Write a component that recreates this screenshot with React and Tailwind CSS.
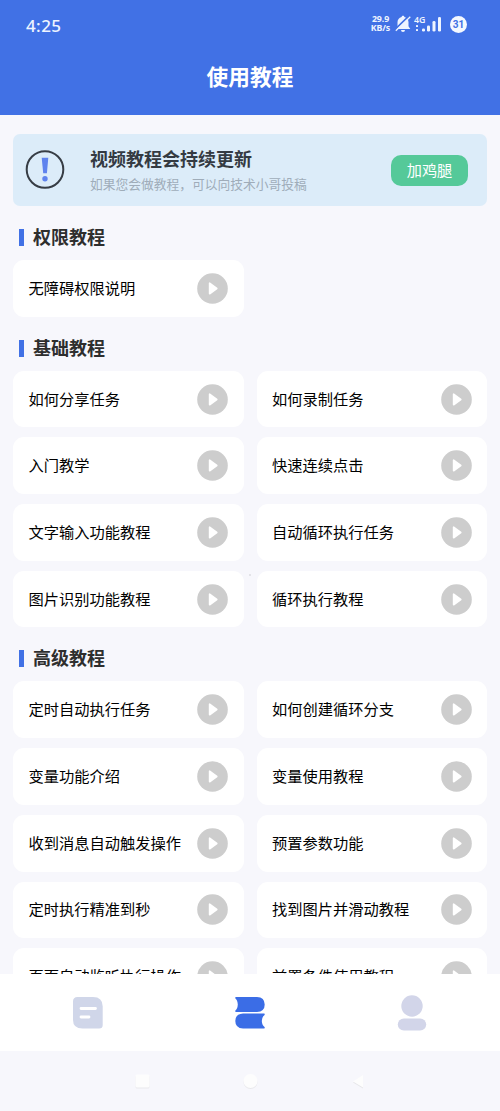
const sections = [
  { title: "权限教程", items: ["无障碍权限说明"] },
  {
    title: "基础教程",
    items: [
      "如何分享任务",
      "如何录制任务",
      "入门教学",
      "快速连续点击",
      "文字输入功能教程",
      "自动循环执行任务",
      "图片识别功能教程",
      "循环执行教程",
    ],
  },
  {
    title: "高级教程",
    items: [
      "定时自动执行任务",
      "如何创建循环分支",
      "变量功能介绍",
      "变量使用教程",
      "收到消息自动触发操作",
      "预置参数功能",
      "定时执行精准到秒",
      "找到图片并滑动教程",
      "页面自动监听执行操作",
      "前置条件使用教程",
    ],
  },
];

function StatusBar() {
  return (
    <div className="flex h-[48px] items-center justify-between pl-[26px] pr-[33px] text-[#eef4ff]">
      <span className="pt-[2px] font-['Noto_Sans',sans-serif] text-[17px] font-medium leading-none tracking-[0.4px]">
        4:25
      </span>
      <div className="flex items-center">
        <div className="w-[21px] text-center font-['Noto_Sans',sans-serif] text-[8.8px] font-bold leading-[9px] tracking-[-0.1px]">
          <div>29.9</div>
          <div>KB/s</div>
        </div>
        {/* Silenciado */}
        <svg width="16" height="18" viewBox="0 0 16 18" className="ml-[4px]">
          <path
            d="M8 .8c.8 0 1.300.5 1.400 1.200C12 2.700 13.500 4.600 13.500 7.200V11.300l1.800 2.700H.7l1.800-2.700V7.200C2.500 4.600 4 2.700 6.600 2 6.700 1.300 7.200.8 8 .8zM6 15h4a2 2 0 0 1-4 0z"
            fill="currentColor"
          />
          <path d="M0 14.500 14 1" stroke="#4171e5" strokeWidth="1.800" />
          <path d="M.8 15.800 15.300 1.800" stroke="currentColor" strokeWidth="1.300" />
        </svg>
        {/* Señal */}
        <svg width="28" height="18" viewBox="0 0 28 18" className="ml-[3px]">
          <text
            x="0"
            y="8"
            fontFamily="Noto Sans, sans-serif"
            fontSize="8.800"
            fontWeight="600"
            fill="currentColor"
          >
            4G
          </text>
          <rect x="2" y="10" width="2" height="2" rx=".6" fill="currentColor" />
          <rect x="2" y="14" width="2" height="2" rx=".6" fill="currentColor" />
          <rect x="8" y="13.500" width="3" height="3" rx="1.300" fill="currentColor" />
          <rect x="13" y="10.500" width="3" height="6" rx="1.300" fill="currentColor" />
          <rect x="18.500" y="6" width="3" height="10.500" rx="1.300" fill="currentColor" />
          <rect x="24" y="2" width="3" height="14.500" rx="1.300" fill="currentColor" />
        </svg>
        <div className="ml-[8px] flex size-[17px] items-center justify-center rounded-full bg-[#f4f8ff] font-['Roboto',sans-serif] text-[10px] font-bold text-[#4171e5]">
          31
        </div>
      </div>
    </div>
  );
}

function PlayIcon() {
  return (
    <svg width="31" height="31" viewBox="0 0 31 31" className="shrink-0">
      <circle cx="15.500" cy="15.500" r="15.300" fill="#cdcdcd" />
      <path
        d="M12.600 10.200v10.600l7.200-5.300z"
        fill="#fff"
        stroke="#fff"
        strokeWidth="1.600"
        strokeLinejoin="round"
      />
    </svg>
  );
}

function Section({ title, items }) {
  return (
    <section>
      <div className="flex h-[54px] items-center pl-[6px] pt-[9px]">
        <span className="h-[17px] w-[5px] bg-[#4171e5]" />
        <h2 className="ml-[9px] pb-[3px] text-[18px] font-bold leading-none text-[#2e2e2e]">
          {title}
        </h2>
      </div>
      <div className="grid grid-cols-2 gap-x-[13px] gap-y-[10px]">
        {items.map((item) => (
          <div
            key={item}
            className="flex h-[56.7px] items-center justify-between rounded-[11px] bg-white pl-[15.5px] pr-[15.500px]"
          >
            <span className="whitespace-nowrap pb-[2px] text-[15.25px] text-black">{item}</span>
            <PlayIcon />
          </div>
        ))}
      </div>
    </section>
  );
}

function TabBar() {
  return (
    <nav className="grid h-[77px] shrink-0 grid-cols-3 bg-white px-[7px]">
      <div className="flex items-center justify-center">
        <svg width="30" height="38" viewBox="0 0 30 38">
          <path
            d="M4.500 3H20q9.700 0 9.700 9.500V31q0 3.500-3.500 3.500H9.500Q0 34.500 0 26V7.500Q0 3 4.500 3z"
            fill="#d0d6e9"
          />
          <path
            d="M8 14.500h14.500M8 23h8"
            stroke="#fff"
            strokeWidth="2.800"
            strokeLinecap="round"
          />
        </svg>
      </div>
      <div className="flex items-center justify-center">
        <svg width="30" height="38" viewBox="0 0 30 38" fill="#3b6de6">
          <path d="M.8 3H22q7.700.4 7.700 7.500T22 18H.8Q0 17.500.4 16.600 2.500 15 2.800 10.500 2.500 6 .4 4.400 0 3.400.8 3z" />
          <path d="M29.200 19.500H8Q.3 19.900.3 27T8 34.500h21.200q.8-.5.400-1.400-2.500-1.600-2.800-6.100.3-4.500 2.800-6.100.4-1-.4-1.400z" />
        </svg>
      </div>
      <div className="flex items-center justify-center">
        <svg width="30" height="38" viewBox="0 0 30 38" fill="#d2d5e9">
          <circle cx="15" cy="12" r="10.700" />
          <rect x=".8" y="24.500" width="28.400" height="12" rx="6" />
        </svg>
      </div>
    </nav>
  );
}

function SystemNav() {
  return (
    <div className="flex h-[60px] shrink-0 items-center justify-center gap-[93px] bg-[#f7f7fc]">
      <svg width="15" height="15" viewBox="0 0 15 15">
        <rect x=".5" y="1.500" width="14" height="13" rx="1.500" fill="#e9e9ec" />
        <rect x=".5" y=".5" width="14" height="13" rx="1.500" fill="#fdfdfd" />
      </svg>
      <svg width="15" height="15" viewBox="0 0 15 15">
        <circle cx="7.500" cy="8" r="7" fill="#e9e9ec" />
        <circle cx="7.500" cy="7" r="7" fill="#fdfdfd" />
      </svg>
      <svg width="15" height="15" viewBox="0 0 15 15">
        <path d="M2 8.500 12 2v12.500z" fill="#e6e6e9" />
        <path d="M2 7.500 12 1v12.500z" fill="#fdfdfd" />
      </svg>
    </div>
  );
}

export default function App() {
  return (
    <div className="relative flex h-[1111px] w-[500px] flex-col overflow-hidden bg-[#f7f7fc] font-['Noto_Sans_CJK_SC',sans-serif]">
      {/* ============ Encabezado ============ */}
      <header className="h-[115px] shrink-0 bg-[#4171e5]">
        <StatusBar />
        <h1 className="mt-[12px] text-center text-[21.7px] font-bold leading-[32px] text-white">
          使用教程
        </h1>
      </header>

      {/* ============ Contenido ============ */}
      <main className="min-h-0 flex-1 overflow-hidden px-[13px] pt-[19px]">
        <div className="flex h-[72px] items-center rounded-[7px] bg-[#dcecf9] pl-[12px] pr-[19px]">
          <svg width="40" height="40" viewBox="0 0 40 40" className="shrink-0">
            <circle cx="20" cy="19.500" r="18.300" fill="none" stroke="#373d45" strokeWidth="2" />
            <path d="M16.700 7.700h6.600l-1.400 15.600h-3.700z" fill="#5f83ee" />
            <circle cx="20" cy="28.800" r="2.700" fill="#5f83ee" />
          </svg>
          <div className="ml-[25px] flex-1">
            <h3 className="text-[18px] font-bold leading-[26px] text-[#343a42]">
              视频教程会持续更新
            </h3>
            <p className="text-[12.75px] leading-[25px] text-[#9facb9]">
              如果您会做教程，可以向技术小哥投稿
            </p>
          </div>
          <button className="h-[31px] w-[77px] rounded-[10px] bg-[#55c999] pb-[2px] text-[15.2px] text-white">
            加鸡腿
          </button>
        </div>

        {sections.map((s) => (
          <Section key={s.title} {...s} />
        ))}
      </main>

      <TabBar />
      <SystemNav />
      <span className="absolute left-[249px] top-[574px] size-[2px] rounded-full bg-[#dcdce2]" />
    </div>
  );
}
